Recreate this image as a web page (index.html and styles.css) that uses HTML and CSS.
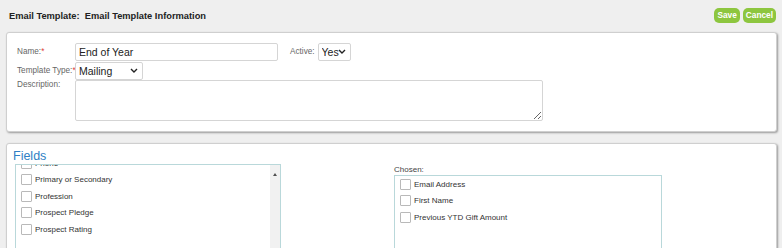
FILE: index.html
```html
<!DOCTYPE html>
<html lang="en">
	<head>
		<meta charset="UTF-8">
		<title>Email Template</title>
		<link rel="stylesheet" href="styles.css">
	</head>
	<body>
		<div class="page-header">
			<h1>Email Template:&nbsp; Email Template Information</h1>
			<div class="header-buttons">
				<button type="button" class="btn">Save</button>
				<button type="button" class="btn">Cancel</button>
			</div>
		</div>

		<div class="panel info-panel">
			<div class="form-row">
				<label class="field-label">Name:<span class="req">*</span></label>
				<input type="text" class="name-input" value="End of Year">
				<label class="field-label active-label">Active:</label>
				<span class="select-wrap active-select">
					<select><option>Yes</option><option>No</option></select>
					<svg class="chevron" viewBox="0 0 8 5" width="8" height="5"><path d="M1 1l3 3 3-3" fill="none" stroke="#222" stroke-width="1.4"/></svg>
				</span>
			</div>
			<div class="form-row">
				<label class="field-label">Template Type:<span class="req">*</span></label>
				<span class="select-wrap type-select">
					<select><option>Mailing</option></select>
					<svg class="chevron" viewBox="0 0 8 5" width="8" height="5"><path d="M1 1l3 3 3-3" fill="none" stroke="#222" stroke-width="1.4"/></svg>
				</span>
			</div>
			<div class="form-row desc-row">
				<label class="field-label">Description:</label>
				<textarea class="desc-input"></textarea>
			</div>
		</div>

		<div class="panel fields-panel">
			<h2>Fields</h2>
			<div class="fields-columns">
				<div class="list-box available">
					<div class="list-scroll">
						<ul class="field-list">
							<li><span class="check"></span>Phone</li>
							<li><span class="check"></span>Primary or Secondary</li>
							<li><span class="check"></span>Profession</li>
							<li><span class="check"></span>Prospect Pledge</li>
							<li><span class="check"></span>Prospect Rating</li>
						</ul>
					</div>
					<div class="scrollbar"><span class="arrow-up"></span></div>
				</div>
				<div class="chosen">
					<div class="chosen-label">Chosen:</div>
					<div class="list-box chosen-box">
						<ul class="field-list">
							<li><span class="check"></span>Email Address</li>
							<li><span class="check"></span>First Name</li>
							<li><span class="check"></span>Previous YTD Gift Amount</li>
						</ul>
					</div>
				</div>
			</div>
		</div>
	</body>
</html>
```

FILE: styles.css
```css
body {
    margin: 0;
    background-color: #efefef;
    font-family: "Liberation Sans", Arial, sans-serif;
    color: #333333;
    overflow: hidden;
    height: 248px;
}

.page-header {
    display: flex;
    align-items: center;
    justify-content: space-between;
    height: 31px;
    padding: 0 6px 0 9px;
}

h1 {
    margin: 0;
    font-size: 9.3px;
    font-weight: bold;
    color: #222222;
}

.header-buttons {
    display: flex;
    gap: 3px;
    margin-top: -1px;
}

.btn {
    background-color: #8dc63f;
    color: #ffffff;
    border: none;
    border-radius: 5px;
    font-family: inherit;
    font-size: 8.3px;
    font-weight: bold;
    height: 15px;
    padding: 0 3px;
    cursor: pointer;
}

.panel {
    background-color: #ffffff;
    border: 1px solid #cfcfcf;
    border-radius: 3px;
    box-shadow: 1px 1px 2px #9a9a9a;
    margin: 0 5px 0 6px;
}

.info-panel {
    height: 89px;
    padding: 9px 10px 0 10px;
    margin-top: 1px;
}

.form-row {
    display: flex;
    align-items: center;
    height: 19px;
}

.field-label {
    width: 58px;
    flex-shrink: 0;
    font-size: 8.2px;
    color: #666666;
    white-space: nowrap;
}

.req {
    color: #e03a3a;
}

input,
select,
textarea {
    font-family: inherit;
    font-size: 10.5px;
    color: #222222;
    border: 1px solid #d5d5d5;
    border-radius: 2px;
    background-color: #ffffff;
    box-sizing: border-box;
    margin: 0;
}

.name-input {
    width: 203px;
    height: 18px;
    padding: 0 3px;
}

.active-label {
    width: auto;
    margin: 0 3px 0 12px;
}

.select-wrap {
    position: relative;
    display: inline-block;
}

.select-wrap select {
    appearance: none;
    -webkit-appearance: none;
    width: 100%;
    height: 18px;
    padding: 0 0 0 3px;
}

.chevron {
    position: absolute;
    right: 5px;
    top: 7px;
    pointer-events: none;
}

.active-select {
    width: 33px;
}

.type-select {
    width: 68px;
}

.desc-row {
    align-items: flex-start;
    height: auto;
    margin-top: 0;
}

.desc-input {
    width: 468px;
    height: 41px;
    resize: vertical;
}

.fields-panel {
    margin-top: 11px;
    height: 140px;
    padding: 4px 8px 0 6px;
}

h2 {
    margin: 0;
    font-size: 12.5px;
    font-weight: normal;
    color: #2f7fc4;
    line-height: 16px;
}

.fields-columns {
    display: flex;
    align-items: flex-start;
}

.list-box {
    border: 1px solid #b9d8da;
    background-color: #ffffff;
    box-sizing: border-box;
}

.available {
    display: flex;
    width: 266px;
    height: 100px;
    margin-left: 2px;
}

.list-scroll {
    flex: 1;
    overflow: hidden;
}

.available .field-list {
    margin-top: -10px;
}

.scrollbar {
    width: 10px;
    background-color: #f1f1f1;
    display: flex;
    justify-content: center;
    padding-top: 8px;
}

.arrow-up {
    width: 0;
    height: 0;
    border-left: 2px solid transparent;
    border-right: 2px solid transparent;
    border-bottom: 3px solid #505050;
}

.field-list {
    list-style: none;
    margin: 0;
    padding: 0 0 0 5px;
    font-family: "Liberation Sans", Tahoma, sans-serif;
    font-size: 8px;
    color: #333333;
}

.field-list li {
    display: flex;
    align-items: center;
    height: 16.5px;
}

.check {
    width: 9px;
    height: 9px;
    border: 1px solid #b9b9b9;
    border-radius: 1px;
    margin-right: 3px;
    flex-shrink: 0;
}

.chosen {
    margin-left: 113px;
    margin-top: 1px;
}

.chosen-label {
    font-size: 8px;
    color: #444444;
    line-height: 10px;
}

.chosen-box {
    width: 268px;
    height: 90px;
    padding-top: 0;
}
```
